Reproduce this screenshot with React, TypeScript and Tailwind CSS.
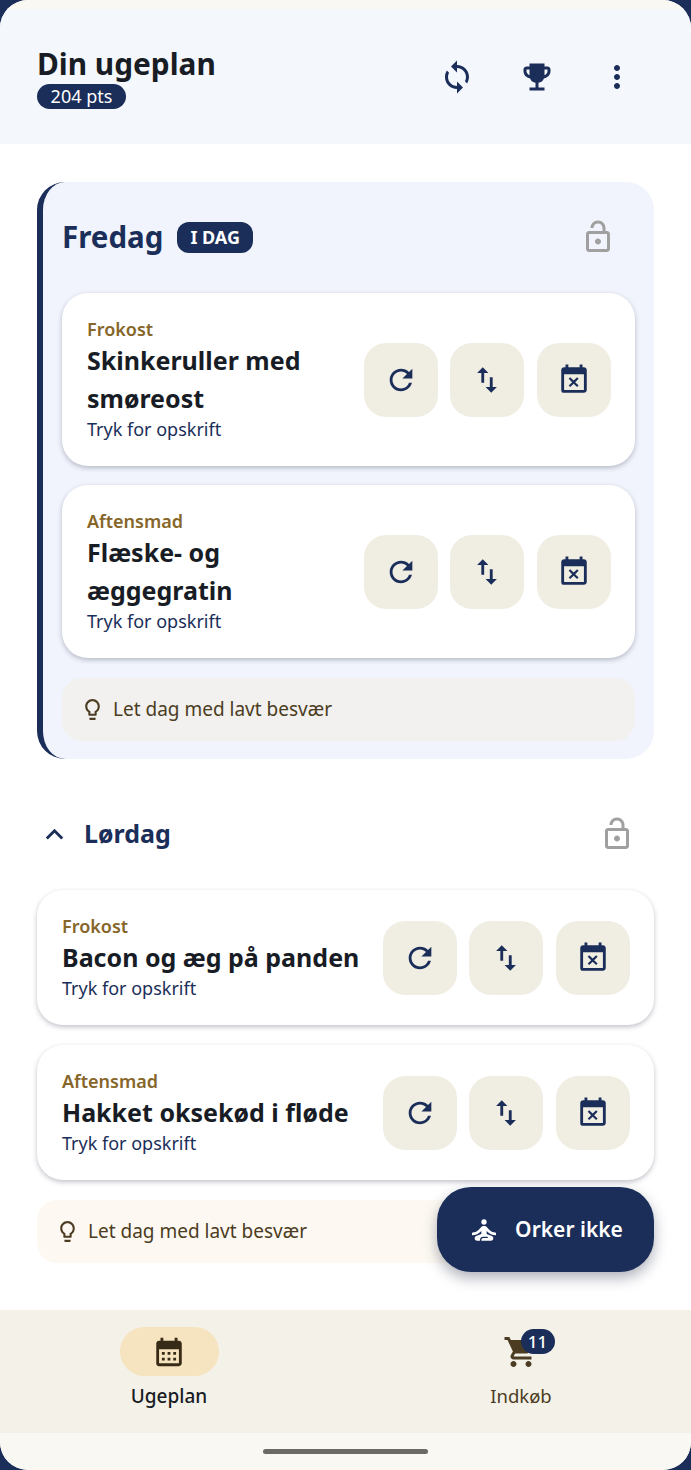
import type { ReactNode } from "react";
import {
  MdSync,
  MdEmojiEvents,
  MdMoreVert,
  MdOutlineLockOpen,
  MdRefresh,
  MdSwapVert,
  MdEventBusy,
  MdExpandLess,
  MdOutlineLightbulb,
  MdSelfImprovement,
  MdShoppingCart,
  MdCalendarMonth,
} from "react-icons/md";

function IconButton({ children }: { children: ReactNode }) {
  return (
    <div className="flex h-[74px] w-[74px] shrink-0 items-center justify-center rounded-[22px] bg-[#f0ede3] text-[#1a2e59]">
      {children}
    </div>
  );
}

function MealCard({ label, title }: { label: string; title: string }) {
  return (
    <div className="flex items-center gap-[5px] rounded-[26px] bg-white py-[25px] pl-[25px] pr-[24px] shadow-[0_2px_5px_rgba(30,35,60,0.28)]">
      <div className="min-w-0 flex-1">
        <p className="text-[18px] leading-[23px] font-semibold text-[#86662a]">{label}</p>
        <p className="text-[25px] leading-[38px] font-bold whitespace-pre-line text-[#181c25]">{title}</p>
        <p className="text-[18px] leading-[24px] text-[#1a2e59]">Tryk for opskrift</p>
      </div>
      <div className="flex shrink-0 gap-[12.6px]">
        <IconButton>
          <MdRefresh size={34} />
        </IconButton>
        <IconButton>
          <MdSwapVert size={34} />
        </IconButton>
        <IconButton>
          <MdEventBusy size={34} />
        </IconButton>
      </div>
    </div>
  );
}

function Hint({ className }: { className: string }) {
  return (
    <div className={`flex h-[63px] items-center gap-[8px] rounded-[20px] pl-[18px] text-[19px] text-[#4b3c22] ${className}`}>
      <MdOutlineLightbulb size={25} />
      <span>Let dag med lavt besvær</span>
    </div>
  );
}

function LockButton() {
  return (
    <div className="flex w-[74px] justify-center text-[#a0a0a0]">
      <MdOutlineLockOpen size={36} />
    </div>
  );
}

export default function App() {
  return (
    <div className="h-[1470px] w-[691px] bg-[#1a2e59] font-['Noto_Sans','Lato',sans-serif]">
      <div className="relative flex h-full flex-col overflow-hidden rounded-[28px] bg-white">
        <div className="h-[9px] bg-[#faf8f3]" />

        <header className="flex h-[135px] items-center justify-between bg-[#f4f7fc] pl-[37px] pr-[37px]">
          <div className="mt-[1px]">
            <h1 className="text-[29.8px] leading-[36px] font-bold text-[#181c25]">Din ugeplan</h1>
            <span className="mt-[2px] block w-[89px] rounded-full bg-[#1a2e59] text-center text-[18px] leading-[25px] text-white">
              204 pts
            </span>
          </div>
          <div className="flex gap-[6px] text-[#1a2e59]">
            <div className="flex w-[74px] justify-center">
              <MdSync size={36} />
            </div>
            <div className="flex w-[74px] justify-center">
              <MdEmojiEvents size={36} />
            </div>
            <div className="flex w-[74px] justify-center">
              <MdMoreVert size={36} />
            </div>
          </div>
        </header>

        <main className="flex-1 px-[37px] pt-[38px]">
          <section className="rounded-[28px] border-l-[6px] border-[#1a2e59] bg-[#f1f4fc] px-[19px] py-[18px]">
            <div className="flex h-[74px] items-center justify-between">
              <div className="flex items-center gap-[14px]">
                <h2 className="text-[29.5px] font-bold text-[#1a2e59]">Fredag</h2>
                <span className="rounded-[12px] bg-[#1a2e59] px-[13px] text-[18px] leading-[31px] font-bold text-white">
                  I DAG
                </span>
              </div>
              <LockButton />
            </div>
            <div className="mt-[19px] flex flex-col gap-[19px]">
              <MealCard label="Frokost" title={"Skinkeruller med\nsmøreost"} />
              <MealCard label="Aftensmad" title={"Flæske- og\næggegratin"} />
              <Hint className="mt-[1px] bg-[#f2f1ef]" />
            </div>
          </section>

          <div className="mt-[47px] flex h-[56px] items-center justify-between">
            <div className="flex items-center gap-[12px] text-[#1a2e59]">
              <MdExpandLess size={35} />
              <h2 className="text-[25px] font-bold">Lørdag</h2>
            </div>
            <LockButton />
          </div>

          <div className="mt-[28px] flex flex-col gap-[20px]">
            <MealCard label="Frokost" title="Bacon og æg på panden" />
            <MealCard label="Aftensmad" title="Hakket oksekød i fløde" />
            <Hint className="bg-[#fdf9f2]" />
          </div>
        </main>

        <div className="absolute left-[437px] top-[1187px] flex h-[85px] w-[217px] items-center justify-center gap-[15px] rounded-[34px] bg-[#1a2e59] text-white shadow-[0_6px_14px_rgba(30,35,60,0.35)]">
          <MdSelfImprovement size={32} />
          <span className="text-[21px] font-semibold">Orker ikke</span>
        </div>

        <nav className="flex h-[123px] justify-between bg-[#f4f1e9] pl-[109px] pr-[110px] pt-[17px]">
          <div className="flex w-[120px] flex-col items-center">
            <div className="flex h-[49px] w-[99px] items-center justify-center rounded-full bg-[#f6e3bf] text-[#372a16]">
              <MdCalendarMonth size={34} />
            </div>
            <span className="mt-[7px] text-[19px] leading-[26px] font-medium text-[#181c25]">Ugeplan</span>
          </div>
          <div className="flex w-[120px] flex-col items-center">
            <div className="relative flex h-[49px] w-[99px] items-center justify-center text-[#4b3c22]">
              <MdShoppingCart size={36} />
              <span className="absolute left-[49px] top-[2px] h-[25px] w-[34px] rounded-full bg-[#1a2e59] text-center text-[17px] leading-[25px] font-medium text-white">
                11
              </span>
            </div>
            <span className="mt-[7px] text-[18.5px] leading-[26px] text-[#4b3c22]">Indkøb</span>
          </div>
        </nav>

        <div className="flex h-[37px] justify-center bg-[#faf8f3] pt-[16px]">
          <div className="h-[5px] w-[165px] rounded-full bg-[#6b6a65]" />
        </div>
      </div>
    </div>
  );
}
